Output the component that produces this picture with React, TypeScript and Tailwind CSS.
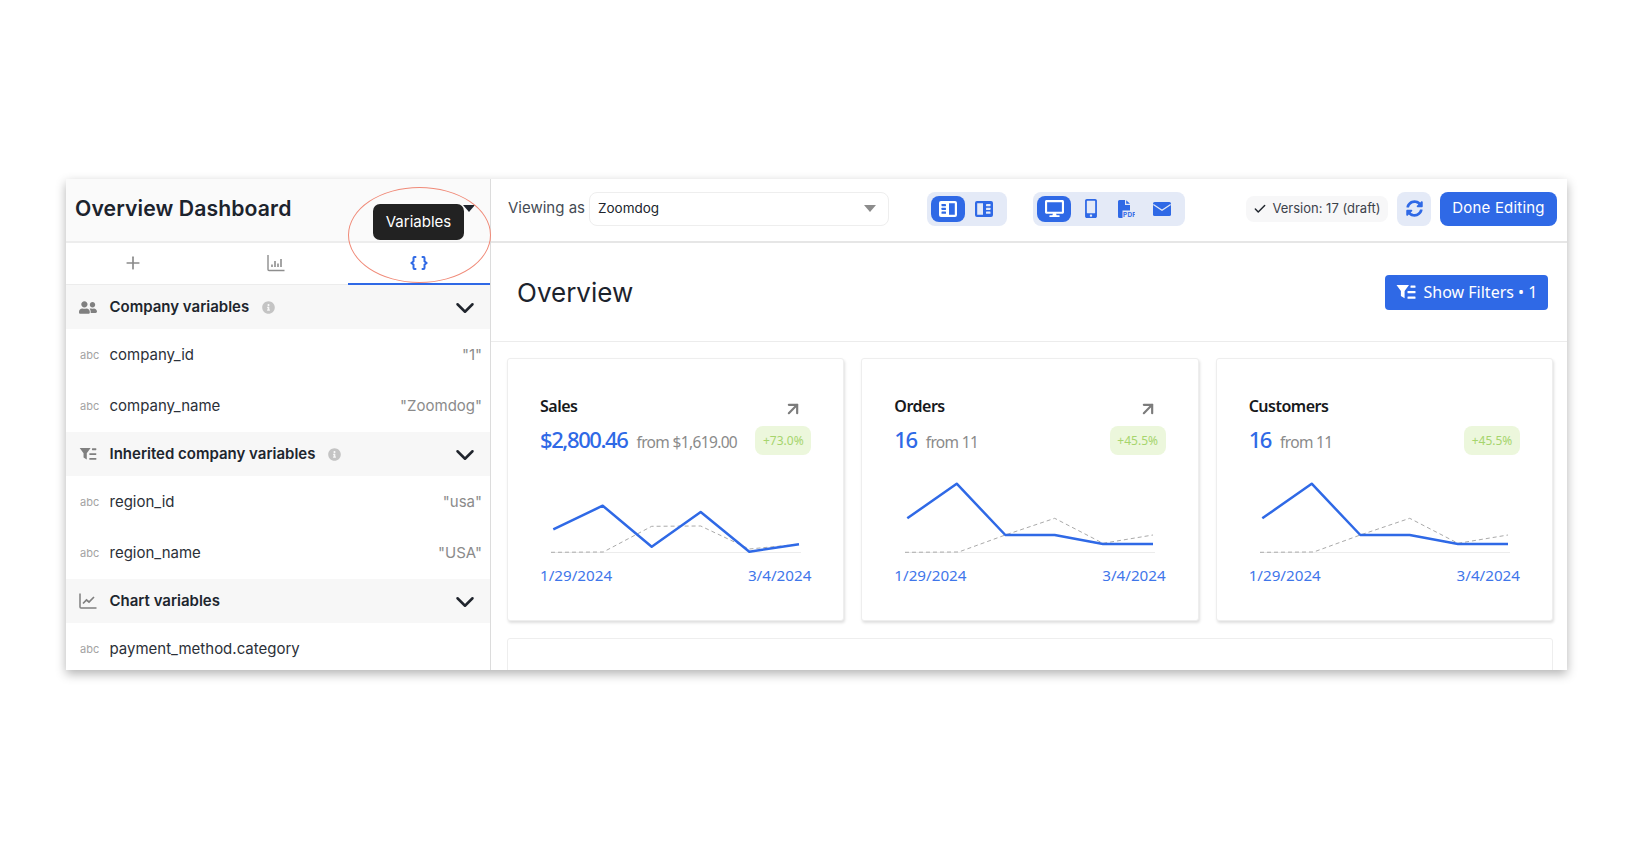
import { ChevronDown, Check, Plus, ArrowUpRight } from "lucide-react";
import { FaUserFriends, FaDesktop, FaSyncAlt, FaInfoCircle, FaMobileAlt } from "react-icons/fa";

const FilterList = ({ className }: { className?: string }) => (
  <svg viewBox="0 0 20 16" className={className} fill="currentColor">
    <path d="M0.5 1h12.5l-4.4 6v7.2l-3.7-2.2V7z" />
    <rect x="14.5" y="1.5" width="5" height="2.2" rx="0.5" />
    <rect x="11.5" y="7" width="8" height="2.2" rx="0.5" />
    <rect x="11.5" y="12.5" width="8" height="2.2" rx="0.5" />
  </svg>
);

const BarsIcon = ({ className }: { className?: string }) => (
  <svg viewBox="0 0 18 18" className={className} fill="none" stroke="currentColor">
    <path d="M1 1v14.500a1 1 0 0 0 1 1h15.500" strokeWidth="1.400" />
    <path d="M5 13v-2.500M8 13V7M11 13V9.500M14 13V5" strokeWidth="1.600" />
  </svg>
);

const LineIcon = ({ className }: { className?: string }) => (
  <svg viewBox="0 0 18 16" className={className} fill="none" stroke="currentColor" strokeWidth="1.500">
    <path d="M1 0.500v13.500a1 1 0 0 0 1 1h15.500" />
    <path d="M4 10.500l3.500-3.500 2.500 2 5-5" strokeWidth="1.700" />
  </svg>
);

const Braces = ({ className }: { className?: string }) => (
  <svg viewBox="0 0 18 14" className={className} fill="none" stroke="currentColor" strokeWidth="2" strokeLinecap="round">
    <path d="M5.500 1H4.500a1 1 0 0 0-1 1v3.200L1.500 7l2 1.800V12a1 1 0 0 0 1 1h1" />
    <path d="M12.500 1h1a1 1 0 0 1 1 1v3.200l2 1.800-2 1.800V12a1 1 0 0 1-1 1h-1" />
  </svg>
);

const PanelLeft = ({ className }: { className?: string }) => (
  <svg viewBox="0 0 18 16" className={className}>
    <path fill="currentColor" fillRule="evenodd" d="M2 0h14a2 2 0 0 1 2 2v12a2 2 0 0 1-2 2H2a2 2 0 0 1-2-2V2a2 2 0 0 1 2-2zm8 2.200v11.600h5.800V2.200z" />
    <rect x="2.500" y="3" width="4.500" height="2.200" rx="0.400" fill="#2f69e6" />
    <rect x="2.500" y="6.800" width="4.500" height="2.200" rx="0.400" fill="#2f69e6" />
    <rect x="2.500" y="10.600" width="4.500" height="2.200" rx="0.400" fill="#2f69e6" />
  </svg>
);

const PanelRight = ({ className }: { className?: string }) => (
  <svg viewBox="0 0 18 16" className={className}>
    <path fill="currentColor" fillRule="evenodd" d="M2 0h14a2 2 0 0 1 2 2v12a2 2 0 0 1-2 2H2a2 2 0 0 1-2-2V2a2 2 0 0 1 2-2zm.2 2.200v11.600H8V2.200z" />
    <rect x="11" y="3" width="4.500" height="2.200" rx="0.400" fill="#e4eaf7" />
    <rect x="11" y="6.800" width="4.500" height="2.200" rx="0.400" fill="#e4eaf7" />
    <rect x="11" y="10.600" width="4.500" height="2.200" rx="0.400" fill="#e4eaf7" />
  </svg>
);

const PdfIcon = ({ className }: { className?: string }) => (
  <svg viewBox="0 0 17 18" className={className} fill="currentColor">
    <path d="M1.500 0H7v5h5v5.500H4.500V18h-3A1.500 1.500 0 0 1 0 16.500v-15A1.500 1.500 0 0 1 1.500 0z" />
    <path d="M8.200 0.300L12 3.800H8.200z" />
    <text x="5" y="17.400" fontSize="6.400" fontWeight="700" fontFamily="Inter, sans-serif" letterSpacing="0.300">PDF</text>
  </svg>
);

const MailIcon = ({ className }: { className?: string }) => (
  <svg viewBox="0 0 18 14" className={className}>
    <rect x="0" y="0" width="18" height="14" rx="1.600" fill="currentColor" />
    <path d="M0.300 2.500L9 8.300l8.700-5.800" fill="none" stroke="#e4eaf7" strokeWidth="1.300" />
  </svg>
);

type Row = { name: string; value?: string };
type Section = { title: string; icon: React.ReactNode; info: boolean; rows: Row[] };

const sections: Section[] = [
  {
    title: "Company variables",
    icon: <FaUserFriends className="w-[18px] h-[15px]" />,
    info: true,
    rows: [
      { name: "company_id", value: '"1"' },
      { name: "company_name", value: '"Zoomdog"' },
    ],
  },
  {
    title: "Inherited company variables",
    icon: <FilterList className="w-[18px] h-[14px]" />,
    info: true,
    rows: [
      { name: "region_id", value: '"usa"' },
      { name: "region_name", value: '"USA"' },
    ],
  },
  {
    title: "Chart variables",
    icon: <LineIcon className="w-[18px] h-[16px]" />,
    info: false,
    rows: [{ name: "payment_method.category" }],
  },
];

const salesBlue = "2.300,49.300 51.700,25.700 100.700,66.700 149.700,32 198.300,71.700 248,64.300";
const salesGrey = "0,72.300 52.300,72 100.700,46.300 149.700,46 198.300,69 248,64.300";
const ordersBlue = "2.300,38.300 51.700,3.700 100.300,55 149.700,55 198,64 248,64";
const ordersGrey = "0,72.300 53.700,72 100.300,55 149.700,38.300 198,63.300 248,55";

const cards = [
  { title: "Sales", value: "$2,800.46", from: "from $1,619.00", delta: "+73.0%", blue: salesBlue, grey: salesGrey, arrow: true },
  { title: "Orders", value: "16", from: "from 11", delta: "+45.5%", blue: ordersBlue, grey: ordersGrey, arrow: true },
  { title: "Customers", value: "16", from: "from 11", delta: "+45.5%", blue: ordersBlue, grey: ordersGrey, arrow: false },
];

const Sidebar = () => (
  <div className="w-[425px] shrink-0 border-r border-[#dcdcdc] relative">
    <div className="h-[64px] bg-[#fafafa] border-b-2 border-[#ededed] flex items-center pl-[9px] pr-[10px] pb-[3px]">
      <h1 className="text-[21.200px] font-semibold text-[#1c232d] tracking-[0.1px]">Overview Dashboard</h1>
    </div>
    <div className="h-[42px] flex border-b border-[#ececec]">
      <div className="w-[134px] flex items-center justify-center text-[#8a8a8a] pb-[2px]">
        <Plus className="w-[20px] h-[20px]" strokeWidth={2} />
      </div>
      <div className="w-[148px] pl-[3px] flex items-center justify-center text-[#8e8e8e] pb-[2px]">
        <BarsIcon className="w-[18px] h-[18px]" />
      </div>
      <div className="flex-1 flex items-center justify-center text-[#2f69e6] border-b-2 border-[#2f69e6] -mb-px">
        <Braces className="w-[18px] h-[14px]" />
      </div>
    </div>
    {sections.map((section) => (
      <div key={section.title}>
        <div className="h-[44px] bg-[#f7f7f7] flex items-center pl-[13px] pr-[10px]">
          <span className="w-[30.500px] text-[#808080] flex items-center">{section.icon}</span>
          <span className="text-[15px] font-semibold text-[#20252d]">{section.title}</span>
          {section.info && <FaInfoCircle className="ml-[13px] w-[13px] h-[13px] text-[#c4c4c4]" />}
          <ChevronDown className="ml-auto mt-[2px] w-[30px] h-[30px] text-[#20252d]" strokeWidth={2} />
        </div>
        {section.rows.map((row) => (
          <div key={row.name} className="h-[51.500px] flex items-center pl-[13px] pr-[8px]">
            <span className="w-[30.500px] text-[11px] text-[#a3a3a3] pl-px">abc</span>
            <span className="text-[15px] text-[#2b3038]">{row.name}</span>
            <span className="ml-auto text-[15px] text-[#8b8b8b]">{row.value}</span>
          </div>
        ))}
      </div>
    ))}
  </div>
);

const Toolbar = () => (
  <div className="h-[64px] border-b-2 border-[#e6e6e6] flex items-center pl-[17px] pr-[10px] pb-[3px] bg-white">
    <span className="text-[15px] text-[#454b54] mr-[4px]">Viewing as</span>
    <div className="w-[300px] h-[34px] border border-[#eeeeee] rounded-lg flex items-center pl-[8px] pr-[12px]">
      <span className="text-[13.500px] text-[#20252d]">Zoomdog</span>
      <span className="ml-auto w-0 h-0 border-x-[6px] border-x-transparent border-t-[7px] border-t-[#8c8c8c]" />
    </div>
    <div className="ml-[38px] h-[34px] w-[80px] bg-[#e4eaf7] rounded-lg flex items-center px-[4px]">
      <div className="w-[34px] h-[26px] bg-[#2f69e6] rounded-lg flex items-center justify-center text-white">
        <PanelLeft className="w-[18px] h-[16px]" />
      </div>
      <div className="flex-1 flex items-center justify-center text-[#2f69e6]">
        <PanelRight className="w-[18px] h-[16px]" />
      </div>
    </div>
    <div className="ml-[26px] h-[34px] w-[152px] bg-[#e4eaf7] rounded-lg flex items-center px-[4px] text-[#2f69e6]">
      <div className="w-[34px] h-[26px] bg-[#2f69e6] rounded-lg flex items-center justify-center text-white">
        <FaDesktop className="w-[19px] h-[17px]" />
      </div>
      <div className="w-[39px] flex items-center justify-center">
        <FaMobileAlt className="w-[14px] h-[19px]" />
      </div>
      <div className="w-[33px] flex items-center justify-center">
        <PdfIcon className="w-[17px] h-[18px]" />
      </div>
      <div className="flex-1 flex items-center justify-center">
        <MailIcon className="w-[18px] h-[14px]" />
      </div>
    </div>
    <div className="ml-auto h-[26px] w-[142px] bg-[#f7f7f8] rounded-lg flex items-center justify-center gap-[5px] text-[13px] text-[#3c424b]">
      <Check className="w-[14px] h-[14px] text-[#20252d]" strokeWidth={2.500} />
      <span>Version: 17 (draft)</span>
    </div>
    <div className="ml-[9px] w-[34px] h-[34px] bg-[#e4eaf7] rounded-lg flex items-center justify-center text-[#2f69e6]">
      <FaSyncAlt className="w-[17px] h-[17px]" />
    </div>
    <button className="ml-[9px] w-[117px] h-[34px] bg-[#2f69e6] rounded-lg text-white text-[15px] tracking-[0.2px]">Done Editing</button>
  </div>
);

const Card = ({ card }: { card: (typeof cards)[number] }) => (
  <div className="h-[263px] border border-[#eeeeee] rounded-[3px] shadow-[1px_2px_3px_rgba(0,0,0,0.13)] bg-white pt-[34px] px-[32px] font-['Noto_Sans',sans-serif]">
    <div className="flex items-center justify-between h-[26px]">
      <span className="text-[16px] font-semibold text-[#17191c] tracking-[-0.5px]">{card.title}</span>
      {card.arrow && <ArrowUpRight className="w-[20px] h-[20px] text-[#7c7c7c] mr-[8px] mt-[5px]" strokeWidth={2.600} />}
    </div>
    <div className="flex items-center justify-between mt-[7px] h-[29px]">
      <div className="flex items-baseline gap-[9px] -mt-[2px]">
        <span className="text-[22px] font-medium text-[#2f69e6] tracking-[-1.400px]">{card.value}</span>
        <span className="text-[15.500px] text-[#8a8a8a] tracking-[-0.650px]">{card.from}</span>
      </div>
      <span className="w-[56px] h-[29px] rounded-lg bg-[#ecf7dc] text-[#a6d56d] text-[12px] flex items-center justify-center">{card.delta}</span>
    </div>
    <svg viewBox="0 0 250 73" className="w-[250px] h-[73px] mt-[25px] ml-[11px] block" fill="none">
      <line x1="0" y1="72.700" x2="250" y2="72.700" stroke="#e8e8e8" strokeWidth="1" />
      <polyline points={card.grey} stroke="#aaaaaa" strokeWidth="1" strokeDasharray="4 3" />
      <polyline points={card.blue} stroke="#2f69e6" strokeWidth="2.500" strokeLinejoin="round" />
    </svg>
    <div className="flex items-center justify-between mt-[11px] text-[15.200px] text-[#3f76ea]">
      <span>1/29/2024</span>
      <span>3/4/2024</span>
    </div>
  </div>
);

const Content = () => (
  <div className="flex-1 overflow-hidden">
    <div className="h-[99px] border-b border-[#ececec] flex items-center justify-between pl-[26px] pr-[19px]">
      <h2 className="text-[26px] text-[#1c232d]">Overview</h2>
      <button className="w-[163px] h-[35px] bg-[#2f69e6] rounded-[4px] text-white text-[16px] flex items-center justify-center gap-[8px] font-['Noto_Sans',sans-serif]">
        <FilterList className="w-[20px] h-[16px]" />
        <span className="-mt-px">Show Filters • 1</span>
      </button>
    </div>
    <div className="pt-[16px] pl-[16px] pr-[14px]">
      <div className="grid grid-cols-3 gap-[17px]">
        {cards.map((card) => (
          <Card key={card.title} card={card} />
        ))}
      </div>
      <div className="mt-[17px] h-[60px] border border-[#eeeeee] rounded-[3px]" />
    </div>
  </div>
);

export default function App() {
  return (
    <div className="w-[1634px] h-[846px] bg-white pt-[179px] pl-[66px] overflow-hidden font-['Inter',sans-serif] relative">
      <div className="w-[1501px] h-[491px] bg-white flex overflow-hidden shadow-[0_4px_10px_rgba(0,0,0,0.3)]">
        <Sidebar />
        <div className="flex-1 flex flex-col min-w-0">
          <Toolbar />
          <Content />
        </div>
      </div>
      {/* annotation over the tab bar */}
      <div className="absolute left-[463px] top-[205px] w-0 h-0 border-x-[6px] border-x-transparent border-t-[7px] border-t-[#20252d]" />
      <div className="absolute left-[373px] top-[204px] w-[91px] h-[36px] bg-[#222222] rounded-[7px] text-white text-[15px] flex items-center justify-center">
        Variables
      </div>
      <div className="absolute left-[348px] top-[187px] w-[143px] h-[96px] rounded-[50%] border border-[#f08a78]" />
    </div>
  );
}
